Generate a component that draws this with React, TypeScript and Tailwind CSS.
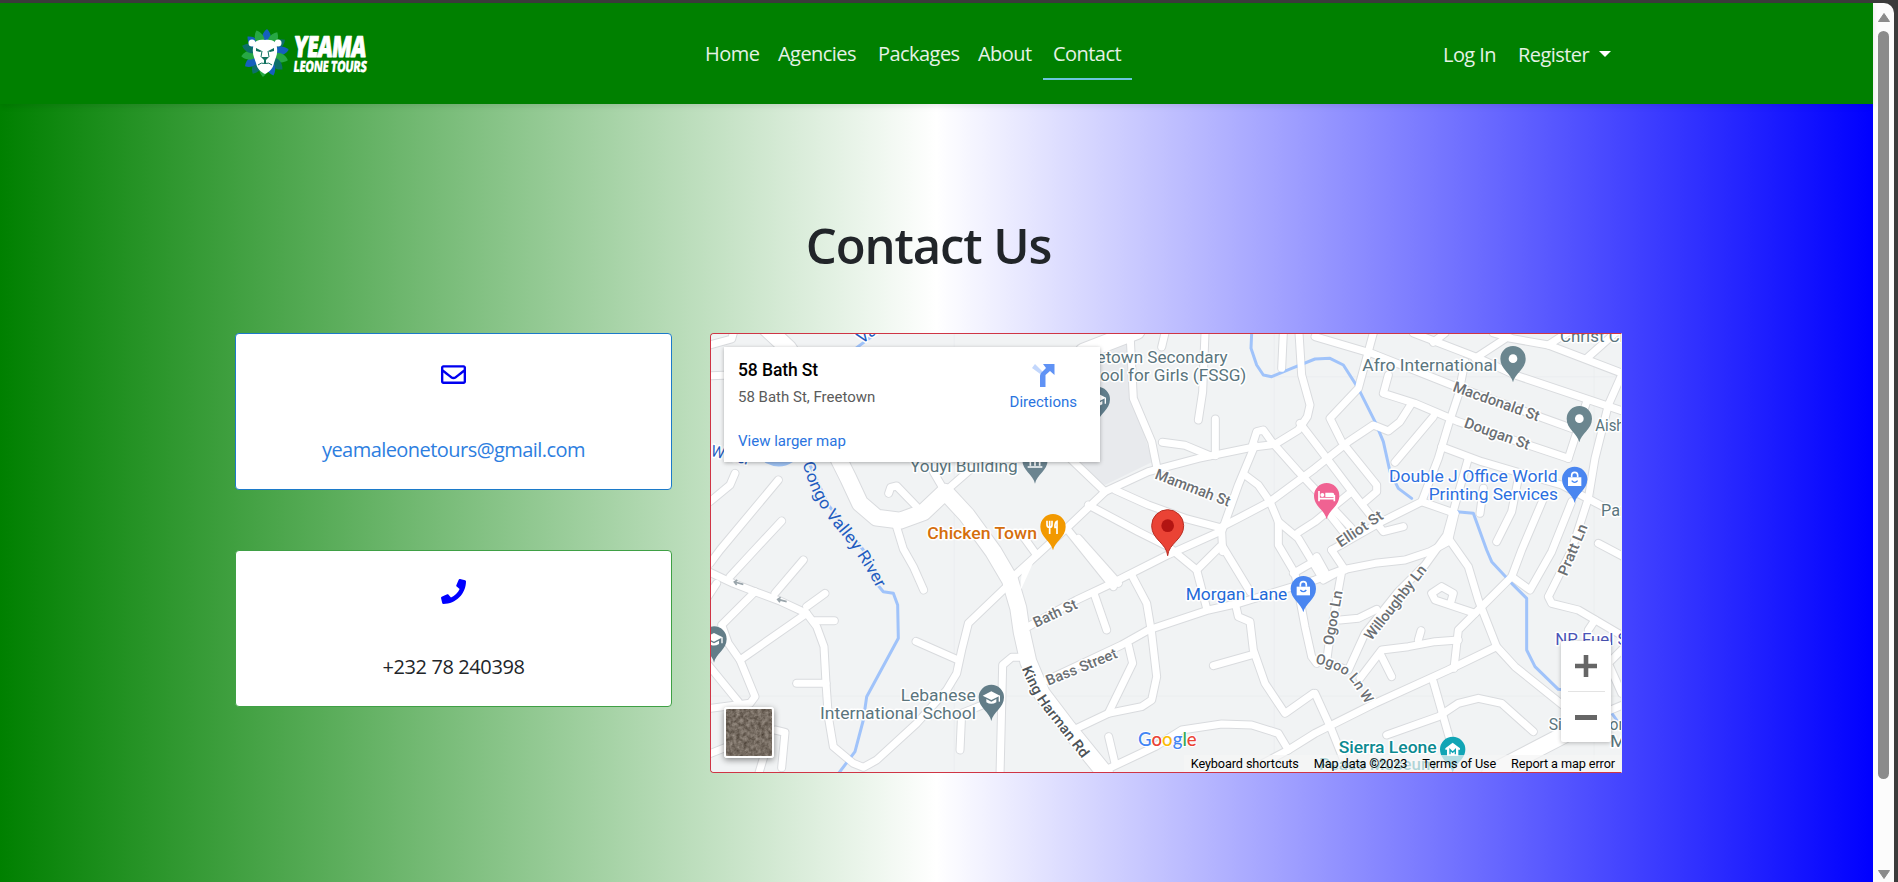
import React from "react";
import { FaRegEnvelope, FaPhone } from "react-icons/fa";

/* Map geometry is stored at three units per pixel. */
const MINOR: string[] = [
  "M30 60L95 42L100 24", "M30 152L90 150", "M30 530L90 480L105 445", "M30 715L60 675L235 465",
  "M245 588L150 690L90 755", "M310 705L225 805",
  "M30 742L100 775L165 800L240 828L320 865L350 905L372 965L378 1075L385 1175L400 1265L460 1315L490 1327L530 1305L650 1195L740 1095L770 1045L785 975L805 895L925 780",
  "M375 805L320 845", "M345 887L403 887", "M320 865L120 1005", "M165 800L65 900L85 955L120 1005L165 1115L150 1135L30 1150",
  "M50 775L20 820", "M25 1020L115 1130", "M290 1075L378 1075", "M225 1215L255 1222L245 1328", "M190 1300L175 1350", "M25 1288L90 1262",
  "M648 949L772 1004", "M585 590L610 672L640 725L671 795", "M780 1275L785 1165L860 1135", "M975 997L935 997L908 1020L900 1350",
  "M566 505L572 487L590 483L655 550", "M735 500L815 430", "M700 440L735 500",
  "M1395 24L1385 66", "M1290 24L1300 220L1355 350L1370 425", "M1515 24L1508 200L1495 285", "M1387 352L1455 361L1530 392", "M1546 282L1546 392",
  "M940 755L1110 600L1215 500L1345 440L1495 400L1655 367L1725 358L1795 315L1822 275L1830 240L1805 150L1797 24",
  "M1655 367L1670 320L1690 315L1715 350L1795 440L1955 610", "M1665 360L1615 480L1565 620L1568 680", "M1750 24L1745 130", "M1800 295L1850 360L1960 505L2050 620L2110 605",
  "M1110 400L1215 500", "M1245 495L1345 540L1455 580L1560 608L1615 580L1710 530L1845 430L1945 350L2020 300L2065 318L2100 290L2135 235",
  "M1165 540L1315 620L1405 665L1490 735L1520 850", "M1635 450L1675 480L1710 530L1735 590L1735 660L1785 745L1815 905L1835 995L1850 1015",
  "M1735 590L1795 640L1870 765L1925 735", "M1795 622L1845 590L1955 500", "M975 910L1130 825L1215 785L1403 690L1560 620",
  "M1490 735L1560 665", "M1100 610L1240 785", "M1135 640L1255 775", "M970 635L1010 690",
  "M1295 750L1340 835L1355 925L1370 1055L1355 1125L1325 1145L1225 1165L1105 1222", "M1182 805L1220 915",
  "M1020 1075L1265 960L1345 915L1525 855L1615 835L1845 765L1925 735L2025 715L2115 705L2190 680L2245 650L2265 565",
  "M1285 960L1298 1015L1225 1165", "M1568 665L1650 800", "M1780 745L1850 705",
  "M1607 840L1615 875L1650 890L1660 975L1695 1075L1755 1165L1840 1105", "M1540 1022L1660 988", "M1226 1235L1245 1315",
  "M1210 1338L1365 1265L1445 1215L1565 1197L1655 1200L1735 1225L1765 1275L1845 1225L2025 1135L2245 1035L2390 965", "M1680 1320L1765 1275",
  "M1845 35L2015 85L2255 180L2615 310", "M2140 24L2325 95L2445 150L2780 262", "M2325 100L2420 38L2545 60L2780 150", "M2380 24L2430 38",
  "M2200 52L2235 24", "M2545 60L2600 24", "M2660 100L2750 20", "M2765 150L2725 240L2685 400L2665 520L2615 675L2545 815L2555 835L2635 855L2780 940",
  "M2020 24L1975 190L1890 280L1925 350L2030 480L2030 500L1995 530", "M2065 150L2050 205L2145 235L2275 290L2605 400", "M2295 110L2275 210L2245 300L2215 400L2165 530L2045 590L1895 675",
  "M2200 275L2085 412", "M2225 365L2345 410L2585 480L2710 545", "M2305 400L2265 540L2240 630L2175 720L2095 800L1995 925L1945 1035", "M2165 530L2265 565",
  "M2350 490L2340 565", "M2455 460L2435 560L2390 650", "M2535 510L2465 675L2435 755L2275 915L2262 1030", "M2615 530L2555 680L2490 795L2435 755", "M2695 655L2780 700", "M2660 230L2605 400",
  "M2245 640L2305 725L2335 825L2390 965L2445 1025L2600 1150", "M1890 570L1945 640", "M1895 675L1935 735", "M1850 695L1875 740",
  "M1925 740L1905 850L1885 970L1880 1010L1940 1035", "M1920 885L1975 880L2030 853", "M2325 865L2205 825L2195 805L2225 785L2260 805L2250 840",
  "M2275 945L2205 950L2125 965L2045 975L1980 1060", "M2155 945L2163 917", "M2040 985L2075 1055", "M1845 1105L1895 1215L1935 1315", "M2200 1070L2250 1245",
  "M2060 1230L2215 1175L2275 1135L2335 1120L2405 1135L2500 1220", "M2685 885L2665 915", "M2780 960L2725 1015L2765 1105", "M2720 1160L2780 1135",
];
const MAJOR: string[] = [
  "M405 380L445 460L480 535L530 578L600 587L670 562L735 500L800 570L880 680L930 765L955 850L965 920L985 1010L1025 1105L1105 1210L1215 1345",
  "M200 10L265 70L330 170", "M2370 1345L2630 1210", "M1150 80L1310 18",
];
const WATER: string[] = [
  "M470 68L535 20", "M325 410L385 540L490 675L525 770L550 800L580 805L593 840L595 940L500 1115L490 1185L465 1280L415 1346",
  "M1655 24L1653 70L1670 120L1690 150L1715 155L1775 130L1845 102L1890 100L1930 120L1975 190L2025 290L2050 350L2070 440L2095 490L2135 520",
  "M2270 560L2320 565L2360 675L2375 710L2435 775L2480 820L2480 975L2505 1025L2575 1093L2610 1095", "M2732 1160L2752 1188",
];

type PinProps = { x: number; y: number; color: string; children?: React.ReactNode; s?: number };
const Pin = ({ x, y, color, children, s = 1 }: PinProps) => (
  <g transform={`translate(${x} ${y}) scale(${s})`}>
    <path d="M0 71C-5 44-38 32-38 0A38 38 0 1 1 38 0C38 32 5 44 0 71Z" fill={color} />
    {children}
  </g>
);
const Cap = () => (
  <g fill="#fff"><path d="M-26-5L0-18L26-5L0 8Z" /><path d="M-15 5V15Q0 24 15 15V5L0 13Z" /><path d="M22-5h4v18h-4z" /></g>
);
const Bag = () => (
  <g><path d="M-20-6H20V20H-20Z" fill="#fff" /><path d="M-9-6V-12A9 9 0 0 1 9-12V-6" fill="none" stroke="#fff" strokeWidth="5" /><path d="M-9 4Q0 14 9 4" fill="none" stroke="#4285f4" strokeWidth="4" /></g>
);

type LabelProps = { x: number; y: number; w: number; t: string; fill?: string; weight?: number; rotate?: number; size?: number };
const Label = ({ x, y, w, t, fill = "#5a757d", weight = 400, rotate = 0, size = 50 }: LabelProps) => (
  <text transform={`translate(${x} ${y}) rotate(${rotate})`} textLength={w} lengthAdjust="spacingAndGlyphs" fontSize={size} fontWeight={weight}
    fill={fill} stroke="#fff" strokeWidth="9" strokeLinejoin="round" paintOrder="stroke">{t}</text>
);

function MapCanvas() {
  return (
    <svg className="block h-full w-full font-[Roboto,sans-serif]" viewBox="33 27 2730 1314" preserveAspectRatio="none">
      <rect x="0" y="0" width="2800" height="1400" fill="#f1f3f4" />
      <path d="M1110 70L1285 30L1297 225L1320 290L1358 410L1215 480L1110 400Z" fill="#e8eaed" />
      <path d="M763 24V1345M1723 24V1345M2682 24V1345M30 1113H2780M1700 155H2780" stroke="#eaecee" strokeWidth="2" />
      <g fill="none" strokeLinecap="round" strokeLinejoin="round">
        <g stroke="#d9dbde" strokeWidth="27">{MINOR.map((d) => <path key={d} d={d} />)}</g>
        <g stroke="#d9dbde" strokeWidth="54">{MAJOR.map((d) => <path key={d} d={d} />)}</g>
        <path d="M200 408Q240 428 275 405" stroke="#9fc3f5" strokeWidth="14" />
        <g stroke="#a0c3fa" strokeWidth="9">{WATER.map((d) => <path key={d} d={d} />)}</g>
        <g stroke="#fff" strokeWidth="21">{MINOR.map((d) => <path key={d} d={d} />)}</g>
        <g stroke="#fff" strokeWidth="48">{MAJOR.map((d) => <path key={d} d={d} />)}</g>
      </g>
      <path d="M965 745L1010 690L960 800Z" fill="#fff" />
      <path d="M130 778L104 771M112 765L103 771L110 780M260 830L234 823M242 817L233 823L240 832" fill="none" stroke="#9aa5ab" strokeWidth="5" />

      <defs>
        <path id="congo" d="M308 415Q335 520 400 600Q480 690 535 800" />
        <path id="harman" d="M965 1030Q1000 1120 1060 1190Q1100 1240 1150 1305" />
        <path id="ogoow" d="M1845 1015Q1920 1030 1955 1070L2005 1150" />
      </defs>
      <g strokeWidth="9" strokeLinejoin="round" paintOrder="stroke">
        <text fill="#1f5cc0" fontSize="50" stroke="#f1f3f4"><textPath href="#congo" textLength="440" lengthAdjust="spacingAndGlyphs">Congo Valley River</textPath></text>
        <text fill="#4d5357" fontSize="43" fontWeight="500" stroke="#fff"><textPath href="#harman" textLength="328" lengthAdjust="spacingAndGlyphs">King Harman Rd</textPath></text>
        <text fill="#6b6f73" fontSize="43" fontWeight="500" stroke="#fff"><textPath href="#ogoow" textLength="205" lengthAdjust="spacingAndGlyphs">Ogoo Ln W</textPath></text>
      </g>
      <Label x={485} y={58} w={60} t="Va" fill="#1f5cc0" rotate={-35} />
      <Label x={30} y={392} w={120} t="Water" fill="#1f5cc0" rotate={14} size={48} />
      <Label x={630} y={442} w={323} t="Youyi Building" size={49} />
      <Label x={682} y={641} w={329} t="Chicken Town" fill="#d56e0c" weight={500} />
      <Label x={1118} y={115} w={465} t="Freetown Secondary" />
      <Label x={1114} y={167} w={525} t="School for Girls (FSSG)" />
      <Label x={1362} y={460} w={238} t="Mammah St" fill="#6b6f73" weight={500} rotate={21} size={45} />
      <Label x={1987} y={138} w={405} t="Afro International" />
      <Label x={2256} y={198} w={272} t="Macdonald St" fill="#6b6f73" weight={500} rotate={19.5} size={45} />
      <Label x={2290} y={306} w={205} t="Dougan St" fill="#6b6f73" weight={500} rotate={19.5} size={45} />
      <Label x={2580} y={50} w={235} t="Christ Chu" />
      <Label x={2686} y={318} w={112} t="Aisha" />
      <Label x={2067} y={472} w={506} t="Double J Office World" fill="#2c6fe0" />
      <Label x={2186} y={525} w={388} t="Printing Services" fill="#2c6fe0" />
      <Label x={2703} y={573} w={98} t="Park" />
      <Label x={1922} y={668} w={158} t="Elliot St" fill="#6b6f73" weight={500} rotate={-34} size={44} />
      <Label x={1457} y={825} w={305} t="Morgan Lane" fill="#1f6ad8" />
      <Label x={1008} y={908} w={140} t="Bath St" fill="#6b6f73" weight={500} rotate={-25} size={44} />
      <Label x={1045} y={1082} w={226} t="Bass Street" fill="#6b6f73" weight={500} rotate={-22} size={44} />
      <Label x={1899} y={962} w={165} t="Ogoo Ln" fill="#6b6f73" weight={500} rotate={-80} size={44} />
      <Label x={2014} y={949} w={272} t="Willoughby Ln" fill="#6b6f73" weight={500} rotate={-52} size={44} />
      <Label x={2600} y={755} w={163} t="Pratt Ln" fill="#6b6f73" weight={500} rotate={-67} size={44} />
      <Label x={602} y={1128} w={225} t="Lebanese" />
      <Label x={360} y={1181} w={468} t="International School" />
      <Label x={2566} y={960} w={260} t="NP Fuel Sta" fill="#4b55b8" size={47} />
      <Label x={2546} y={1215} w={260} t="Sierra Leone" />
      <Label x={2730} y={1267} w={80} t="Mu" />
      <Label x={1916} y={1283} w={294} t="Sierra Leone" fill="#0c8a91" weight={500} />
      <Label x={1857} y={1336} w={350} t="Peace Museum" fill="#0c8a91" weight={500} />

      <Pin x={1192} y={223} color="#607d8b"><Cap /></Pin>
      <Pin x={1005} y={405} color="#6b8490"><path d="M-22 21H22M-14 17V0M0 17V0M14 17V0" stroke="#fff" strokeWidth="5" /></Pin>
      <Pin x={42} y={942} color="#637d88"><Cap /></Pin>
      <Pin x={874} y={1117} color="#637d88"><Cap /></Pin>
      <Pin x={2439} y={101} color="#6b868f"><circle r="13" fill="#fff" /></Pin>
      <Pin x={2638} y={281} color="#6b868f"><circle r="13" fill="#fff" /></Pin>
      <Pin x={2624} y={463} color="#4a86f0"><Bag /></Pin>
      <Pin x={1810} y={791} color="#4a86f0"><Bag /></Pin>
      <Pin x={1059} y={605} color="#f29900">
        <path d="M-18-18V-6Q-18 2-10 2Q-3 2-3-6V-18M-10-18V22M12 22V-16Q5-14 6 2H12" fill="none" stroke="#fff" strokeWidth="5" />
      </Pin>
      <Pin x={1880} y={512} color="#f06292">
        <path d="M-23-14V17M-23 9H23V17M23 9V-2" fill="none" stroke="#fff" strokeWidth="5" /><circle cx="-13" cy="-2" r="6" fill="#fff" /><path d="M-4-9H17Q23-9 23-2V4H-4Z" fill="#fff" />
      </Pin>
      <Pin x={2258} y={1273} color="#12a5b5">
        <path d="M-22-3L0-20L22-3V1H17V20H-17V1H-22Z" fill="#fff" /><path d="M-8 15V1L0 9L8 1V15" fill="none" stroke="#12a5b5" strokeWidth="4" />
      </Pin>
      <g transform="translate(1403 602)">
        <path d="M0 90C-3 52-48 42-48 0A48 48 0 1 1 48 0C48 42 3 52 0 90Z" fill="#ea4335" stroke="#b92d22" strokeWidth="3" />
        <circle r="19" fill="#b31412" />
      </g>
      <text x="1314" y="1262" fontSize="58" fontFamily="Lato, sans-serif" fontWeight="500" textLength="176" lengthAdjust="spacingAndGlyphs" stroke="#fff" strokeWidth="6" paintOrder="stroke">
        <tspan fill="#4285f4">G</tspan><tspan fill="#ea4335">o</tspan><tspan fill="#fbbc05">o</tspan><tspan fill="#4285f4">g</tspan><tspan fill="#34a853">l</tspan><tspan fill="#ea4335">e</tspan>
      </text>
    </svg>
  );
}

function Logo() {
  const petals = Array.from({ length: 14 }, (_, i) => i);
  return (
    <svg className="block h-[50px] w-[128px] overflow-visible" viewBox="0 0 128 50">
      <g transform="translate(22 25)">
        {petals.map((i) => (
          <path key={i} d="M0-24C6-19 6-11 0-6C-6-11-6-19 0-24Z" fill={["#1560bd", "#27a844", "#0c6f6a"][i % 3]} transform={`rotate(${i * 25.7 + 5})`} />
        ))}
        <circle cx="-13" cy="-10" r="3.500" fill="#fff" /><circle cx="13" cy="-10" r="3.500" fill="#fff" />
        <path d="M0-13C8-14 12-11 12-5C13 2 10 6 9 10C8 16 4 19 0 21C-4 19-8 16-9 10C-10 6-13 2-12-5C-12-11-8-14 0-13Z" fill="#fff" />
        <path d="M-9-5L-3-2L-5-1L-9-2ZM9-5L3-2L5-1L9-2ZM-4 4H4L0 8ZM-1 7H1V11H-1Z" fill="#10715f" />
        <path d="M-7 12Q-4 9 0 10.500Q4 9 7 12M-3-2L-4 4M3-2L4 4" fill="none" stroke="#10715f" strokeWidth="1" />
      </g>
      <g fill="#fff" stroke="#fff" fontFamily="'Open Sans', sans-serif" fontWeight="800" strokeLinejoin="round">
        <text transform="translate(50 28.500) skewX(-6)" fontSize="29" strokeWidth="1" textLength="72" lengthAdjust="spacingAndGlyphs">YEAMA</text>
        <text transform="translate(50 43.500) skewX(-6)" fontSize="15.500" strokeWidth=".2" textLength="73" lengthAdjust="spacingAndGlyphs">LEONE TOURS</text>
      </g>
    </svg>
  );
}

const LINKS = [
  { t: "Home", c: "w-[73px]" }, { t: "Agencies", c: "w-[100px]" }, { t: "Packages", c: "w-[100px]" }, { t: "About", c: "w-[74px]" },
];

function Navbar() {
  return (
    <nav className="relative flex h-[101px] shrink-0 items-start bg-[#008000] text-[20px] leading-[30px] tracking-[-0.55px] text-[#e5f2e5] shadow-[0_2px_6px_rgba(0,0,0,0.1)]">
      <div className="ml-[243px] mt-[25px] w-[453px]"><Logo /></div>
      <div className="mt-[36px] flex w-[737px]">
        {LINKS.map((l) => <a key={l.t} className={`${l.c} whitespace-nowrap pl-[9px]`}>{l.t}</a>)}
        <a className="h-[41px] w-[89px] border-b-2 border-[#6cc5dc] pl-[10px]">Contact</a>
      </div>
      <div className="mt-[37px] flex">
        <a className="w-[75px] whitespace-nowrap pl-[10px]">Log In</a>
        <a className="flex pl-[10px]"><span className="w-[72px]">Register</span><span className="ml-[9px] mt-[11px] h-0 w-0 border-x-[6px] border-t-[6px] border-x-transparent border-t-white" /></a>
      </div>
    </nav>
  );
}

function InfoWindow() {
  return (
    <div className="absolute left-[13px] top-[13px] flex h-[115px] w-[376px] justify-between bg-white pl-[14px] pr-[23px] font-[Roboto,sans-serif] shadow-[0_1px_4px_rgba(0,0,0,0.3)]">
      <div className="flex flex-col">
        <div className="mt-[12px] text-[17.500px] font-medium leading-[22px] tracking-[-0.1px] text-black">58 Bath St</div>
        <div className="mt-[6px] text-[15px] leading-[20px] text-[#5b5b5b]">58 Bath St, Freetown</div>
        <a className="mt-[24px] text-[15px] leading-[20px] text-[#2a74e0]">View larger map</a>
      </div>
      <div className="flex flex-col items-center pt-[16px]">
        <svg className="block h-[24px] w-[24px]" viewBox="0 0 24 24">
          <path d="M1 5L4 1L12 9V13Z" fill="#c3d7fc" />
          <path d="M9 24V13Q9 11 10.500 9.500L15 5L12 1H23.500V12L19 8L14.500 12V24Z" fill="#5f92f5" />
        </svg>
        <div className="mt-[5px] text-[15px] leading-[20px] text-[#2a74e0]">Directions</div>
      </div>
    </div>
  );
}

function MapFrame() {
  return (
    <div className="relative h-[440px] w-[912px] overflow-hidden rounded-l-[4px] border border-[#cf3545] border-r-[#f1f3f4]">
      <MapCanvas />
      <InfoWindow />
      <div className="absolute bottom-[14px] left-[13px] h-[51px] w-[50px] overflow-hidden rounded-[3px] border-2 border-white shadow-[0_2px_6px_rgba(0,0,0,0.45)]">
        <svg className="block h-full w-full" viewBox="0 0 46 47">
          <filter id="ground" x="0" y="0" width="100%" height="100%" colorInterpolationFilters="sRGB">
            <feTurbulence type="fractalNoise" baseFrequency=".28" numOctaves="3" seed="4" />
            <feColorMatrix values=".4 0 0 0 .26 .4 0 0 0 .22 .4 0 0 0 .18 0 0 0 0 1" />
          </filter>
          <rect width="46" height="47" fill="#756b61" filter="url(#ground)" />
        </svg>
      </div>
      <div className="absolute right-[10px] top-[307px] flex h-[101px] w-[50px] flex-col items-center rounded-[2px] bg-white shadow-[0_1px_4px_rgba(0,0,0,0.25)]">
        <svg className="h-[50px] w-[50px]" viewBox="0 0 50 50"><path d="M14 25H36M25 14V36" stroke="#666" strokeWidth="4.600" /></svg>
        <div className="h-px w-[37px] shrink-0 bg-[#e3e3e3]" />
        <svg className="h-[50px] w-[50px]" viewBox="0 0 50 50"><path d="M14 25.500H36" stroke="#666" strokeWidth="5" /></svg>
      </div>
      <div className="absolute bottom-0 right-0 flex h-[17px] items-center justify-between gap-[15px] whitespace-nowrap bg-[#f5f5f5]/70 pl-[7px] pr-[6px] font-[Roboto,sans-serif] text-[12.700px] leading-[17px] tracking-[-0.11px] text-black">
        <span>Keyboard shortcuts</span><span>Map data ©2023</span><span>Terms of Use</span><span>Report a map error</span>
      </div>
    </div>
  );
}

function Scrollbar() {
  return (
    <div className="flex w-[21px] shrink-0 flex-col items-center rounded-tr-[10px] bg-[#fcfcfc]">
      <svg className="mt-[10px] block h-[9px] w-[12px] shrink-0" viewBox="0 0 12 9"><path d="M6 .5L11.500 8.500H.5Z" fill="#8b8b8b" stroke="#8b8b8b" strokeLinejoin="round" /></svg>
      <div className="mt-[9px] h-[748px] w-[11px] shrink-0 rounded-full bg-[#8b8b8b]" />
      <svg className="mt-auto mb-[3px] block h-[9px] w-[12px] shrink-0" viewBox="0 0 12 9"><path d="M.5 .5H11.500L6 8.500Z" fill="#8b8b8b" stroke="#8b8b8b" strokeLinejoin="round" /></svg>
    </div>
  );
}

export default function App() {
  return (
    <div className="flex h-[882px] w-[1898px] overflow-hidden bg-[#3b3b3b] pr-[4px] pt-[3px] font-['Open_Sans','Noto_Sans',sans-serif]">
      <div className="flex w-[1873px] shrink-0 flex-col">
        <Navbar />
        <main className="flex grow flex-col bg-[linear-gradient(90deg,#008000,#ffffff,#0000ff)] pl-[235px]">
          <h1 className="mt-[109px] w-[1387px] text-center text-[49px] font-semibold leading-[64px] tracking-[-1.1px] text-[#212529]">Contact Us</h1>
          <div className="mt-[56px] flex gap-[38px]">
            <div className="flex flex-col gap-[60px]">
              <div className="flex h-[157px] w-[437px] flex-col items-center rounded-[4px] border border-[#1c7ac9] bg-white">
                <FaRegEnvelope className="mt-[28px] block text-[#0000f0]" size={25} />
                <a className="mt-[48px] text-[20px] leading-[30px] tracking-[-0.55px] text-[#2d7ee0]">yeamaleonetours@gmail.com</a>
              </div>
              <div className="flex h-[157px] w-[437px] flex-col items-center rounded-[4px] border border-[#3fa045] bg-white">
                <FaPhone className="mt-[28px] block text-[#0000ff]" size={25} />
                <p className="mt-[48px] text-[20px] leading-[30px] tracking-[-0.4px] text-[#212529]">+232 78 240398</p>
              </div>
            </div>
            <MapFrame />
          </div>
        </main>
      </div>
      <Scrollbar />
    </div>
  );
}
